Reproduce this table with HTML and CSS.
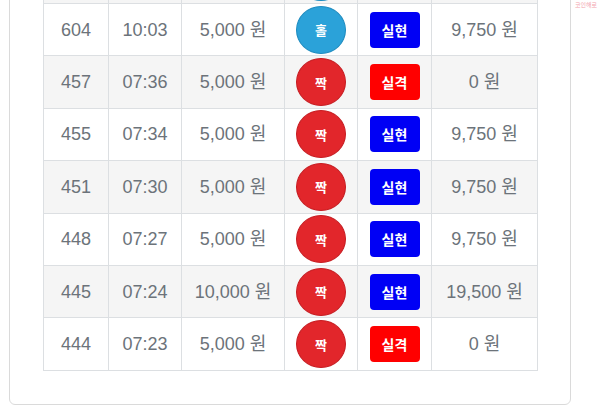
FILE: index.html
```html
<!DOCTYPE html>
<html lang="ko">
<head>
<meta charset="utf-8">
<title>결과</title>
<link rel="stylesheet" href="styles.css">
</head>
<body>
<div class="mark">코인해로</div>
<div class="page">
  <div class="card">
    <table class="result">
      <colgroup>
        <col class="c-no"><col class="c-time"><col class="c-bet"><col class="c-pick"><col class="c-state"><col class="c-win">
      </colgroup>
      <tbody>
        <tr><td></td><td></td><td></td><td><span class="ball hol"></span></td><td></td><td></td></tr>
        <tr><td>604</td><td>10:03</td><td>5,000 원</td><td><span class="ball hol">홀</span></td><td><span class="tag ok">실현</span></td><td>9,750 원</td></tr>
        <tr><td>457</td><td>07:36</td><td>5,000 원</td><td><span class="ball jjak">짝</span></td><td><span class="tag fail">실격</span></td><td>0 원</td></tr>
        <tr><td>455</td><td>07:34</td><td>5,000 원</td><td><span class="ball jjak">짝</span></td><td><span class="tag ok">실현</span></td><td>9,750 원</td></tr>
        <tr><td>451</td><td>07:30</td><td>5,000 원</td><td><span class="ball jjak">짝</span></td><td><span class="tag ok">실현</span></td><td>9,750 원</td></tr>
        <tr><td>448</td><td>07:27</td><td>5,000 원</td><td><span class="ball jjak">짝</span></td><td><span class="tag ok">실현</span></td><td>9,750 원</td></tr>
        <tr><td>445</td><td>07:24</td><td>10,000 원</td><td><span class="ball jjak">짝</span></td><td><span class="tag ok">실현</span></td><td>19,500 원</td></tr>
        <tr><td>444</td><td>07:23</td><td>5,000 원</td><td><span class="ball jjak">짝</span></td><td><span class="tag fail">실격</span></td><td>0 원</td></tr>
      </tbody>
    </table>
  </div>
</div>
</body>
</html>
```
FILE: styles.css
```css
html, body {
  margin: 0;
  padding: 0;
  background: #ffffff;
}
body {
  width: 600px;
  height: 418px;
  overflow: hidden;
  position: relative;
  font-family: "Liberation Sans", "Noto Sans CJK KR", sans-serif;
}
.mark {
  position: absolute;
  top: 1px;
  right: 3px;
  font-size: 6px;
  line-height: 8px;
  color: #f3a3ad;
  font-family: "Noto Sans CJK KR", sans-serif;
}
.page {
  padding: 0 29px 15px 9px;
}
.card {
  margin-top: -83.4px;
  border: 1px solid #dadada;
  border-radius: 6px;
  padding: 33px;
}
.result {
  width: 494px;
  border-collapse: collapse;
  table-layout: fixed;
  color: #6c737a;
  font-size: 18px;
}
.c-no { width: 65px; }
.c-time { width: 73px; }
.c-bet { width: 103px; }
.c-pick { width: 73px; }
.c-state { width: 74px; }
.c-win { width: 106px; }
.result td {
  border: 1px solid #dcdfe2;
  height: 51.4px;
  padding: 0;
  line-height: 20px;
  text-align: center;
  vertical-align: middle;
  white-space: nowrap;
}
.result tr:nth-child(odd) td {
  background: #f5f5f5;
}
.result tr:nth-child(even) td {
  background: #ffffff;
}
.ball {
  display: flex;
  align-items: center;
  justify-content: center;
  margin: 0 auto;
  width: 50px;
  height: 48px;
  box-sizing: border-box;
  border-radius: 50%;
  color: #ffffff;
  font-weight: bold;
  font-size: 13px;
  line-height: 1;
  font-family: "Noto Sans CJK KR", sans-serif;
}
.hol {
  background: #2ba2d9;
  border: 1px solid #1e8cc0;
}
.jjak {
  background: #e2262b;
  border: 1px solid #c71d22;
}
.tag {
  display: flex;
  align-items: center;
  justify-content: center;
  margin: 0 auto;
  width: 50px;
  height: 36px;
  border-radius: 4px;
  color: #ffffff;
  font-weight: bold;
  font-size: 14px;
  line-height: 1;
  font-family: "Noto Sans CJK KR", sans-serif;
}
.ok { background: #0000f5; }
.fail { background: #ff0000; }
```
